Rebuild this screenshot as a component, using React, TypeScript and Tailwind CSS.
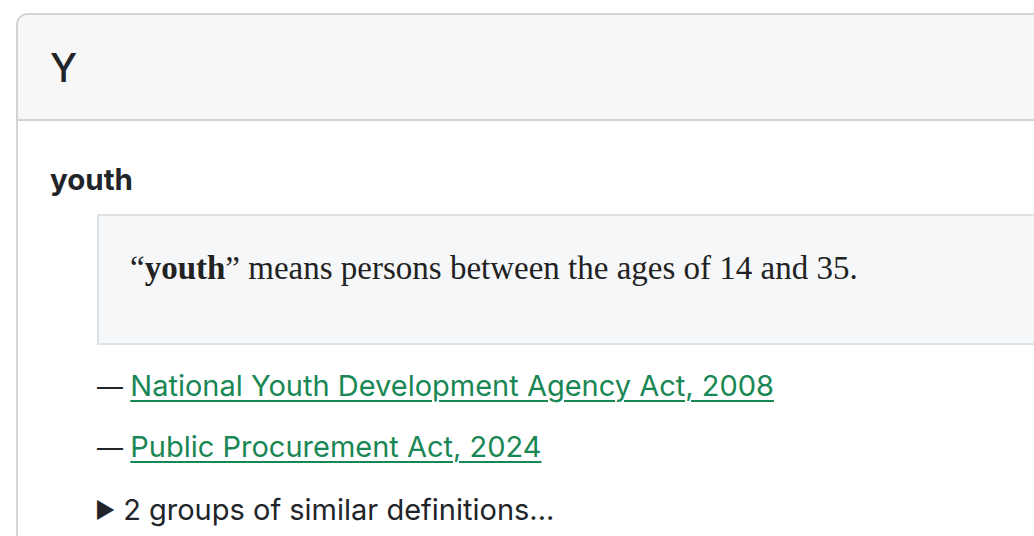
import React from "react";

export default function App() {
  return (
    <div className="w-[1034px] h-[536px] overflow-hidden bg-white text-[#212529]" style={{ fontFamily: "Inter, 'Noto Sans', sans-serif" }}>
      <div className="ml-[16px] mt-[13px] w-[1100px] h-[600px] border-2 border-[#d3d3d3] rounded-[12px] overflow-hidden">
        <div className="h-[106px] bg-[#f7f7f7] border-b-2 border-[#d3d3d3] pl-[32px] flex items-center">
          <h2 className="text-[39px] leading-none font-medium text-[#212529]">Y</h2>
        </div>
        <div className="pl-[32px] pt-[40px]">
          <h4 className="text-[29.5px] leading-[36px] font-bold">youth</h4>
          <div className="ml-[47px] mt-[17px] h-[131px] bg-[#f6f7f9] border-2 border-[#dee2e6] pl-[31px] pt-[32px]">
            <p className="text-[33px] leading-[40px] text-[#222]" style={{ fontFamily: "'Liberation Serif', serif" }}>
              “<b>youth</b>” means persons between the ages of 14 and 35.
            </p>
          </div>
          <div className="ml-[47px] mt-[21px] text-[29px] leading-[40px]">
            <div className="mb-[20px]">
              <span className="text-[26px]">— </span><a href="#" className="text-[#198754] underline underline-offset-[4px] decoration-2">National Youth Development Agency Act, 2008</a>
            </div>
            <div className="mb-[22px]">
              <span className="text-[26px]">— </span><a href="#" className="text-[#198754] underline underline-offset-[4px] decoration-2">Public Procurement Act, 2024</a>
            </div>
            <div className="flex items-center">
              <span className="text-[22px] mr-[8px] -ml-[2px]">▶</span>
              <span>2 groups of similar definitions...</span>
            </div>
          </div>
        </div>
      </div>
    </div>
  );
}
